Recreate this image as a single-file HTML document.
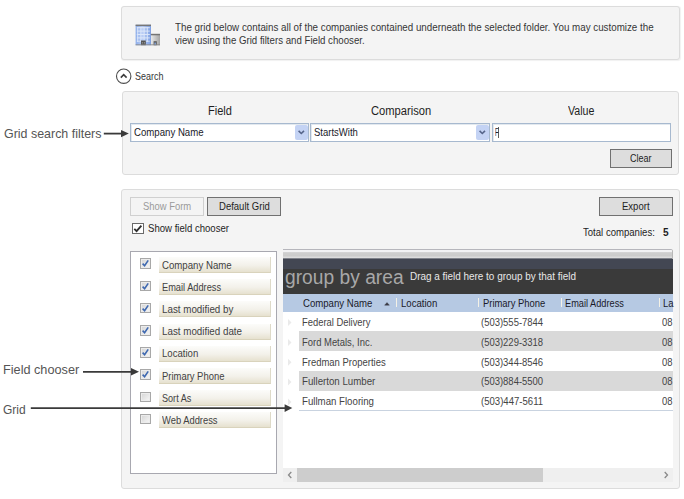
<!DOCTYPE html>
<html><head><meta charset="utf-8"><style>
html,body{margin:0;padding:0;background:#fff;width:684px;height:499px;overflow:hidden;position:relative}
*{box-sizing:border-box}
.t{position:absolute;white-space:nowrap;font-family:"Liberation Sans", sans-serif;transform-origin:0 0}
.a{position:absolute}
</style></head><body>
<!-- info panel -->
<div class="a" style="left:121px;top:6px;width:559px;height:54px;background:#f4f4f4;border:1px solid #dcdcdc;border-radius:3px;box-shadow:0.5px 0.5px 1px rgba(0,0,0,0.06)"></div>
<svg class="a" style="left:135px;top:24px" width="26" height="22" viewBox="0 0 26 22">
  <defs>
    <linearGradient id="bl" x1="0" x2="1" y1="0" y2="0"><stop offset="0" stop-color="#8eaeea"/><stop offset="0.45" stop-color="#b9cdf5"/><stop offset="1" stop-color="#7d9fe2"/></linearGradient>
    <linearGradient id="gr" x1="0" x2="1" y1="0" y2="0"><stop offset="0" stop-color="#e8e8e8"/><stop offset="1" stop-color="#a4a4a4"/></linearGradient>
  </defs>
  <rect x="0.6" y="0.8" width="15.4" height="20.4" fill="url(#bl)"/>
  <rect x="0.6" y="0.6" width="15.4" height="1.5" fill="#767676"/>
  <g fill="#e6eefc" opacity="0.85">
    <rect x="1.8" y="3.2" width="13" height="1"/><rect x="1.8" y="6.6" width="13" height="1"/><rect x="1.8" y="10" width="13" height="1"/><rect x="1.8" y="13.4" width="13" height="1"/><rect x="1.8" y="16.8" width="13" height="0.8"/>
    <rect x="2.2" y="3" width="1" height="15"/><rect x="5.4" y="3" width="1" height="15"/><rect x="8.6" y="3" width="1" height="15"/><rect x="11.8" y="3" width="1" height="15"/>
  </g>
  <rect x="6" y="16.5" width="4.8" height="4.7" fill="#555"/>
  <rect x="6.8" y="18" width="1.2" height="1.6" fill="#888"/><rect x="8.8" y="18" width="1.2" height="1.6" fill="#888"/>
  <rect x="16" y="10" width="9" height="11.2" fill="url(#gr)"/>
  <rect x="16" y="9.8" width="9" height="1.5" fill="#747474"/>
  <rect x="18.6" y="17.2" width="3.2" height="4" fill="#5a5a5a"/>
  <rect x="19.4" y="18.6" width="1.5" height="2.6" fill="#86a6dc"/>
  <rect x="0.6" y="20.4" width="24.4" height="0.9" fill="#888"/>
</svg>
<!-- search toggle -->
<svg class="a" style="left:114px;top:66px" width="20" height="20" viewBox="0 0 20 20">
  <circle cx="9.7" cy="10.2" r="7.2" fill="none" stroke="#4c4c4c" stroke-width="1.1"/>
  <polyline points="6.8,11.6 9.7,8.7 12.6,11.6" fill="none" stroke="#3c3c3c" stroke-width="1.6"/>
</svg>
<!-- search panel -->
<div class="a" style="left:122px;top:91px;width:557px;height:84px;background:#f4f4f4;border:1px solid #dcdcdc;border-radius:3px"></div>
<!-- combo 1 -->
<div class="a" style="left:130px;top:123px;width:179px;height:19px;background:#fff;border:1px solid #a7b9cf;box-shadow:inset 1px 1px 0 #e3e9ef"></div>
<div class="a" style="left:295px;top:125px;width:12.5px;height:14.5px;background:#c4d3f4;border-radius:2px"></div>
<svg class="a" style="left:295px;top:125px" width="13" height="15" viewBox="0 0 13 15"><polyline points="3.6,5.9 6.3,8.5 9.0,5.9" fill="none" stroke="#56658a" stroke-width="1.6"/></svg>
<!-- combo 2 -->
<div class="a" style="left:310px;top:123px;width:180px;height:19px;background:#fff;border:1px solid #a7b9cf;box-shadow:inset 1px 1px 0 #e3e9ef"></div>
<div class="a" style="left:476px;top:125px;width:12.5px;height:14.5px;background:#c4d3f4;border-radius:2px"></div>
<svg class="a" style="left:476px;top:125px" width="13" height="15" viewBox="0 0 13 15"><polyline points="3.6,5.9 6.3,8.5 9.0,5.9" fill="none" stroke="#56658a" stroke-width="1.6"/></svg>
<!-- input -->
<div class="a" style="left:492px;top:123px;width:179px;height:19px;background:#fff;border:1px solid #a7b9cf;box-shadow:inset 1px 1px 0 #e3e9ef"></div>
<div class="a" style="left:498.4px;top:126.5px;width:1px;height:11.5px;background:#606060"></div>
<!-- clear -->
<div class="a" style="left:610px;top:149px;width:62px;height:19px;background:#dddddd;border:1px solid #707070"></div>
<!-- grid panel -->
<div class="a" style="left:121px;top:189px;width:559px;height:300px;background:#f4f4f4;border:1px solid #dcdcdc;border-radius:3px"></div>
<div class="a" style="left:130px;top:197px;width:74px;height:19px;background:#f4f4f4;border:1px solid #d0d0d0"></div>
<div class="a" style="left:207px;top:197px;width:74px;height:19px;background:#dddddd;border:1px solid #707070"></div>
<div class="a" style="left:599px;top:197px;width:74px;height:19px;background:#dddddd;border:1px solid #707070"></div>
<!-- show field chooser checkbox -->
<div class="a" style="left:132px;top:223px;width:12px;height:11px;background:#fff;border:1px solid #6a6a6a"></div>
<svg class="a" style="left:132px;top:223px" width="12" height="12" viewBox="0 0 12 12"><polyline points="2.3,5.8 4.6,8.2 9.4,2.6" fill="none" stroke="#2e2e2e" stroke-width="1.8"/></svg>
<!-- field chooser panel -->
<div class="a" style="left:130px;top:251px;width:147px;height:222.5px;background:#fff;border:1px solid #a8a8b0"></div>
<div class="a" style="left:158.5px;top:257.00px;width:112.5px;height:16px;background:linear-gradient(#fcfcfa,#f3f1ea 55%,#e6e1cf);border-bottom:1.5px solid #d9d3bc;border-right:1px solid #dedac8"></div>
<div class="a" style="left:140px;top:258.40px;width:10.5px;height:10.5px;background:linear-gradient(135deg,#d4d4d4,#f8f8f8);border:1px solid #a8a8a8;box-shadow:inset 0 0 0 1px #ececec"></div>
<svg class="a" style="left:140px;top:258.40px" width="11" height="11" viewBox="0 0 11 11"><polyline points="2.6,5.6 4.6,7.8 8.2,2.4" fill="none" stroke="#3e68b0" stroke-width="1.6"/></svg>
<div class="a" style="left:158.5px;top:279.20px;width:112.5px;height:16px;background:linear-gradient(#fcfcfa,#f3f1ea 55%,#e6e1cf);border-bottom:1.5px solid #d9d3bc;border-right:1px solid #dedac8"></div>
<div class="a" style="left:140px;top:280.60px;width:10.5px;height:10.5px;background:linear-gradient(135deg,#d4d4d4,#f8f8f8);border:1px solid #a8a8a8;box-shadow:inset 0 0 0 1px #ececec"></div>
<svg class="a" style="left:140px;top:280.60px" width="11" height="11" viewBox="0 0 11 11"><polyline points="2.6,5.6 4.6,7.8 8.2,2.4" fill="none" stroke="#3e68b0" stroke-width="1.6"/></svg>
<div class="a" style="left:158.5px;top:301.40px;width:112.5px;height:16px;background:linear-gradient(#fcfcfa,#f3f1ea 55%,#e6e1cf);border-bottom:1.5px solid #d9d3bc;border-right:1px solid #dedac8"></div>
<div class="a" style="left:140px;top:302.80px;width:10.5px;height:10.5px;background:linear-gradient(135deg,#d4d4d4,#f8f8f8);border:1px solid #a8a8a8;box-shadow:inset 0 0 0 1px #ececec"></div>
<svg class="a" style="left:140px;top:302.80px" width="11" height="11" viewBox="0 0 11 11"><polyline points="2.6,5.6 4.6,7.8 8.2,2.4" fill="none" stroke="#3e68b0" stroke-width="1.6"/></svg>
<div class="a" style="left:158.5px;top:323.60px;width:112.5px;height:16px;background:linear-gradient(#fcfcfa,#f3f1ea 55%,#e6e1cf);border-bottom:1.5px solid #d9d3bc;border-right:1px solid #dedac8"></div>
<div class="a" style="left:140px;top:325.00px;width:10.5px;height:10.5px;background:linear-gradient(135deg,#d4d4d4,#f8f8f8);border:1px solid #a8a8a8;box-shadow:inset 0 0 0 1px #ececec"></div>
<svg class="a" style="left:140px;top:325.00px" width="11" height="11" viewBox="0 0 11 11"><polyline points="2.6,5.6 4.6,7.8 8.2,2.4" fill="none" stroke="#3e68b0" stroke-width="1.6"/></svg>
<div class="a" style="left:158.5px;top:345.80px;width:112.5px;height:16px;background:linear-gradient(#fcfcfa,#f3f1ea 55%,#e6e1cf);border-bottom:1.5px solid #d9d3bc;border-right:1px solid #dedac8"></div>
<div class="a" style="left:140px;top:347.20px;width:10.5px;height:10.5px;background:linear-gradient(135deg,#d4d4d4,#f8f8f8);border:1px solid #a8a8a8;box-shadow:inset 0 0 0 1px #ececec"></div>
<svg class="a" style="left:140px;top:347.20px" width="11" height="11" viewBox="0 0 11 11"><polyline points="2.6,5.6 4.6,7.8 8.2,2.4" fill="none" stroke="#3e68b0" stroke-width="1.6"/></svg>
<div class="a" style="left:158.5px;top:368.00px;width:112.5px;height:16px;background:linear-gradient(#fcfcfa,#f3f1ea 55%,#e6e1cf);border-bottom:1.5px solid #d9d3bc;border-right:1px solid #dedac8"></div>
<div class="a" style="left:140px;top:369.40px;width:10.5px;height:10.5px;background:linear-gradient(135deg,#d4d4d4,#f8f8f8);border:1px solid #a8a8a8;box-shadow:inset 0 0 0 1px #ececec"></div>
<svg class="a" style="left:140px;top:369.40px" width="11" height="11" viewBox="0 0 11 11"><polyline points="2.6,5.6 4.6,7.8 8.2,2.4" fill="none" stroke="#3e68b0" stroke-width="1.6"/></svg>
<div class="a" style="left:158.5px;top:390.20px;width:112.5px;height:16px;background:linear-gradient(#fcfcfa,#f3f1ea 55%,#e6e1cf);border-bottom:1.5px solid #d9d3bc;border-right:1px solid #dedac8"></div>
<div class="a" style="left:140px;top:391.60px;width:10.5px;height:10.5px;background:linear-gradient(135deg,#d4d4d4,#f8f8f8);border:1px solid #a8a8a8;box-shadow:inset 0 0 0 1px #ececec"></div>
<div class="a" style="left:158.5px;top:412.40px;width:112.5px;height:16px;background:linear-gradient(#fcfcfa,#f3f1ea 55%,#e6e1cf);border-bottom:1.5px solid #d9d3bc;border-right:1px solid #dedac8"></div>
<div class="a" style="left:140px;top:413.80px;width:10.5px;height:10.5px;background:linear-gradient(135deg,#d4d4d4,#f8f8f8);border:1px solid #a8a8a8;box-shadow:inset 0 0 0 1px #ececec"></div>
<!-- grid -->
<div class="a" style="left:283px;top:249px;width:390px;height:233px;background:#fff"></div>
<div class="a" style="left:283px;top:249px;width:390px;height:10.2px;background:linear-gradient(#b6b6bc 0px,#b6b6bc 1px,#f2f2f4 1.5px,#f2f2f4 2.8px,#cfcfcf 3.6px,#cbcbcb 7.2px,#e2e2e2 8.1px,#d4d4d6 9px,#5c606a 9.7px,#434753 10.2px);border-right:1px solid #b8b8b8;border-radius:0 2px 0 0"></div>
<div class="a" style="left:283px;top:259.2px;width:390px;height:9.8px;background:#434753"></div>
<div class="a" style="left:283px;top:268.5px;width:390px;height:25.4px;background:#3a3a3a"></div>
<div class="a" style="left:283px;top:293.5px;width:390px;height:18px;background:#b6c9e3"></div>
<div class="a" style="left:299px;top:331px;width:374px;height:20px;background:#d9d9d9"></div>
<div class="a" style="left:299px;top:370.8px;width:374px;height:19.8px;background:#d9d9d9"></div>
<div class="a" style="left:299px;top:409.8px;width:374px;height:1px;background:#c9d3e0"></div>
<div class="a" style="left:396px;top:298px;width:1.2px;height:9.4px;background:#f4f1e6"></div>
<div class="a" style="left:478px;top:298px;width:1.2px;height:9.4px;background:#f4f1e6"></div>
<div class="a" style="left:560.6px;top:298px;width:1.2px;height:9.4px;background:#f4f1e6"></div>
<div class="a" style="left:658.8px;top:298px;width:1.2px;height:9.4px;background:#f4f1e6"></div>
<svg class="a" style="left:383px;top:301px" width="8" height="6" viewBox="0 0 8 6"><polygon points="1.6,4.2 4,1.6 6.4,4.2" fill="#3a3a44" stroke="#3a3a44" stroke-width="0.4" stroke-linejoin="round"/></svg>
<!-- row indicators -->
<svg class="a" style="left:286px;top:311px" width="8" height="100" viewBox="0 0 8 100">
  <g fill="#eaeaea">
  <polygon points="2,8 5.5,11.5 2,15"/>
  <polygon points="2,28 5.5,31.5 2,35"/>
  <polygon points="2,47.8 5.5,51.3 2,54.8"/>
  <polygon points="2,67.6 5.5,71.1 2,74.6"/>
  <polygon points="2,87.4 5.5,90.9 2,94.4"/>
  </g>
</svg>
<!-- scrollbar -->
<div class="a" style="left:283px;top:468px;width:390px;height:13.5px;background:#efefef"></div>
<div class="a" style="left:297px;top:468px;width:245.5px;height:13.5px;background:#cdcdcd"></div>
<svg class="a" style="left:283px;top:468px" width="14" height="14" viewBox="0 0 14 14"><polyline points="8.3,4 5.5,7 8.3,10" fill="none" stroke="#8a8a8a" stroke-width="1.3"/></svg>
<svg class="a" style="left:659px;top:468px" width="14" height="14" viewBox="0 0 14 14"><polyline points="5.7,4 8.5,7 5.7,10" fill="none" stroke="#8a8a8a" stroke-width="1.3"/></svg>
<!-- annotations -->
<svg class="a" style="left:0;top:0" width="684" height="499" viewBox="0 0 684 499">
  <g stroke="#3a3a3a" stroke-width="1.8" fill="#3a3a3a">
    <line x1="103.8" y1="133.6" x2="122" y2="133.6"/>
    <polygon stroke="none" points="121,130 128.8,133.6 121,137.2"/>
    <line x1="83" y1="371.8" x2="132" y2="371.8"/>
    <polygon stroke="none" points="131,368 139,371.8 131,375.6"/>
    <line x1="30.8" y1="408.1" x2="285.5" y2="408.1"/>
    <polygon stroke="none" points="284.6,404.3 292.3,408.1 284.6,411.9"/>
  </g>
</svg>

<div class="t" style="left:174.60px;top:21.69px;font-size:11px;line-height:11px;color:#363636;font-weight:normal;transform:scaleX(0.8894)">The grid below contains all of the companies contained underneath the selected folder. You may customize the</div>
<div class="t" style="left:174.60px;top:34.69px;font-size:11px;line-height:11px;color:#363636;font-weight:normal;transform:scaleX(0.8787)">view using the Grid filters and Field chooser.</div>
<div class="t" style="left:135.00px;top:70.69px;font-size:11px;line-height:11px;color:#363636;font-weight:normal;transform:scaleX(0.8147)">Search</div>
<div class="t" style="left:207.90px;top:104.84px;font-size:12px;line-height:12px;color:#1e1e1e;font-weight:normal;transform:scaleX(0.9196)">Field</div>
<div class="t" style="left:370.60px;top:104.84px;font-size:12px;line-height:12px;color:#1e1e1e;font-weight:normal;transform:scaleX(0.9310)">Comparison</div>
<div class="t" style="left:567.90px;top:104.84px;font-size:12px;line-height:12px;color:#1e1e1e;font-weight:normal;transform:scaleX(0.8862)">Value</div>
<div class="t" style="left:133.50px;top:126.69px;font-size:11px;line-height:11px;color:#1a1a2a;font-weight:normal;transform:scaleX(0.8758)">Company Name</div>
<div class="t" style="left:314.20px;top:126.69px;font-size:11px;line-height:11px;color:#1a1a2a;font-weight:normal;transform:scaleX(0.8634)">StartsWith</div>
<div class="t" style="left:494.60px;top:126.69px;font-size:11px;line-height:11px;color:#1a1a2a;font-weight:normal;transform:scaleX(0.5143)">F</div>
<div class="t" style="left:630.20px;top:152.69px;font-size:11px;line-height:11px;color:#1e1e1e;font-weight:normal;transform:scaleX(0.8188)">Clear</div>
<div class="t" style="left:142.70px;top:200.69px;font-size:11px;line-height:11px;color:#9a9a9a;font-weight:normal;transform:scaleX(0.8560)">Show Form</div>
<div class="t" style="left:219.00px;top:200.69px;font-size:11px;line-height:11px;color:#1e1e1e;font-weight:normal;transform:scaleX(0.8656)">Default Grid</div>
<div class="t" style="left:622.30px;top:200.69px;font-size:11px;line-height:11px;color:#1e1e1e;font-weight:normal;transform:scaleX(0.8665)">Export</div>
<div class="t" style="left:147.90px;top:222.69px;font-size:11px;line-height:11px;color:#1e1e1e;font-weight:normal;transform:scaleX(0.8716)">Show field chooser</div>
<div class="t" style="left:582.50px;top:226.69px;font-size:11px;line-height:11px;color:#1e1e1e;font-weight:normal;transform:scaleX(0.8704)">Total companies:</div>
<div class="t" style="left:662.80px;top:226.69px;font-size:11px;line-height:11px;color:#1e1e1e;font-weight:bold;transform:scaleX(0.9167)">5</div>
<div class="t" style="left:162.00px;top:259.69px;font-size:11px;line-height:11px;color:#424242;font-weight:normal;transform:scaleX(0.8770)">Company Name</div>
<div class="t" style="left:162.00px;top:281.69px;font-size:11px;line-height:11px;color:#424242;font-weight:normal;transform:scaleX(0.8402)">Email Address</div>
<div class="t" style="left:162.00px;top:303.69px;font-size:11px;line-height:11px;color:#424242;font-weight:normal;transform:scaleX(0.8908)">Last modified by</div>
<div class="t" style="left:162.00px;top:325.69px;font-size:11px;line-height:11px;color:#424242;font-weight:normal;transform:scaleX(0.8900)">Last modified date</div>
<div class="t" style="left:162.00px;top:347.69px;font-size:11px;line-height:11px;color:#424242;font-weight:normal;transform:scaleX(0.8705)">Location</div>
<div class="t" style="left:162.00px;top:370.69px;font-size:11px;line-height:11px;color:#424242;font-weight:normal;transform:scaleX(0.8577)">Primary Phone</div>
<div class="t" style="left:162.00px;top:392.69px;font-size:11px;line-height:11px;color:#424242;font-weight:normal;transform:scaleX(0.8259)">Sort As</div>
<div class="t" style="left:162.00px;top:414.69px;font-size:11px;line-height:11px;color:#424242;font-weight:normal;transform:scaleX(0.8518)">Web Address</div>
<div class="t" style="left:285.20px;top:267.07px;font-size:20px;line-height:20px;color:#a8a8a8;font-weight:normal;transform:scaleX(0.9614)">group by area</div>
<div class="t" style="left:409.70px;top:270.69px;font-size:11px;line-height:11px;color:#e8e8e8;font-weight:normal;transform:scaleX(0.9019)">Drag a field here to group by that field</div>
<div class="t" style="left:302.50px;top:297.69px;font-size:11px;line-height:11px;color:#1a1a2a;font-weight:normal;transform:scaleX(0.8720)">Company Name</div>
<div class="t" style="left:400.50px;top:297.69px;font-size:11px;line-height:11px;color:#1a1a2a;font-weight:normal;transform:scaleX(0.8729)">Location</div>
<div class="t" style="left:482.50px;top:297.69px;font-size:11px;line-height:11px;color:#1a1a2a;font-weight:normal;transform:scaleX(0.8564)">Primary Phone</div>
<div class="t" style="left:565.00px;top:297.69px;font-size:11px;line-height:11px;color:#1a1a2a;font-weight:normal;transform:scaleX(0.8374)">Email Address</div>
<div class="t" style="left:662.80px;top:297.69px;font-size:11px;line-height:11px;color:#1a1a2a;font-weight:normal;transform:scaleX(0.8600)">La</div>
<div class="t" style="left:301.90px;top:316.69px;font-size:11px;line-height:11px;color:#444444;font-weight:normal;transform:scaleX(0.8538)">Federal Delivery</div>
<div class="t" style="left:481.30px;top:316.69px;font-size:11px;line-height:11px;color:#444444;font-weight:normal;transform:scaleX(0.8605)">(503)555-7844</div>
<div class="t" style="left:662.00px;top:316.69px;font-size:11px;line-height:11px;color:#444444;font-weight:normal;transform:scaleX(0.8600)">08</div>
<div class="t" style="left:301.90px;top:336.69px;font-size:11px;line-height:11px;color:#444444;font-weight:normal;transform:scaleX(0.8576)">Ford Metals, Inc.</div>
<div class="t" style="left:481.30px;top:336.69px;font-size:11px;line-height:11px;color:#444444;font-weight:normal;transform:scaleX(0.8605)">(503)229-3318</div>
<div class="t" style="left:662.00px;top:336.69px;font-size:11px;line-height:11px;color:#444444;font-weight:normal;transform:scaleX(0.8600)">08</div>
<div class="t" style="left:301.90px;top:356.69px;font-size:11px;line-height:11px;color:#444444;font-weight:normal;transform:scaleX(0.8607)">Fredman Properties</div>
<div class="t" style="left:481.30px;top:356.69px;font-size:11px;line-height:11px;color:#444444;font-weight:normal;transform:scaleX(0.8605)">(503)344-8546</div>
<div class="t" style="left:662.00px;top:356.69px;font-size:11px;line-height:11px;color:#444444;font-weight:normal;transform:scaleX(0.8600)">08</div>
<div class="t" style="left:301.90px;top:375.69px;font-size:11px;line-height:11px;color:#444444;font-weight:normal;transform:scaleX(0.8816)">Fullerton Lumber</div>
<div class="t" style="left:481.30px;top:375.69px;font-size:11px;line-height:11px;color:#444444;font-weight:normal;transform:scaleX(0.8605)">(503)884-5500</div>
<div class="t" style="left:662.00px;top:375.69px;font-size:11px;line-height:11px;color:#444444;font-weight:normal;transform:scaleX(0.8600)">08</div>
<div class="t" style="left:301.90px;top:395.69px;font-size:11px;line-height:11px;color:#444444;font-weight:normal;transform:scaleX(0.8789)">Fullman Flooring</div>
<div class="t" style="left:481.30px;top:395.69px;font-size:11px;line-height:11px;color:#444444;font-weight:normal;transform:scaleX(0.8704)">(503)447-5611</div>
<div class="t" style="left:662.00px;top:395.69px;font-size:11px;line-height:11px;color:#444444;font-weight:normal;transform:scaleX(0.8600)">08</div>
<div class="t" style="left:4.00px;top:126.57px;font-size:13.5px;line-height:13.5px;color:#555555;font-weight:normal;transform:scaleX(0.9214)">Grid search filters</div>
<div class="t" style="left:3.06px;top:362.57px;font-size:13.5px;line-height:13.5px;color:#555555;font-weight:normal;transform:scaleX(0.9399)">Field chooser</div>
<div class="t" style="left:3.10px;top:402.57px;font-size:13.5px;line-height:13.5px;color:#555555;font-weight:normal;transform:scaleX(0.8882)">Grid</div>
</body></html>
